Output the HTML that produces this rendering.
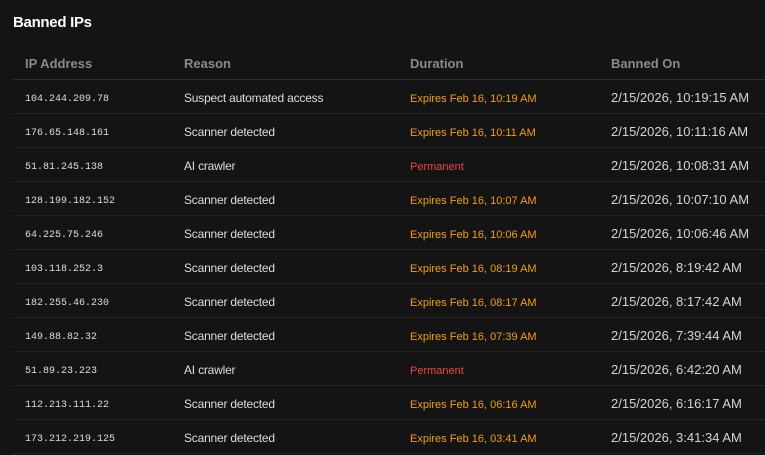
<!DOCTYPE html>
<html><head><meta charset="utf-8"><style>
html,body{margin:0;padding:0;background:#141414;width:765px;height:455px;overflow:hidden;font-family:"Liberation Sans",sans-serif;}
h2{position:absolute;left:13px;top:14px;margin:0;font-size:15px;font-weight:bold;color:#fff;letter-spacing:-0.3px}
.t{position:absolute;left:13px;top:46px;width:752px;}
.row{display:flex;align-items:center;height:33px;border-bottom:1px solid #222;white-space:nowrap}
.h{font-size:13px;font-weight:bold;color:#8a8a8a;border-bottom-color:#2c2c2c;padding-top:1px;height:32px}
.row>div{line-height:1}
.c1{padding-left:12px;width:159px}
.c2{width:226px}.c3{width:201px}
.ip{font-family:"Liberation Mono",monospace;font-size:10px;color:#ddd;position:relative;top:2px}
.r{font-size:12px;color:#ddd;letter-spacing:-0.2px}
.d{font-size:11px;color:#f59e0b;position:relative;top:2px}
.p{color:#ef4444}
.b{font-size:13px;color:#d4d4d4}
.row:not(.h)>div{padding-top:2px}
</style></head><body>
<h2>Banned IPs</h2>
<div class="t">
<div class="row h"><div class="c1">IP Address</div><div class="c2">Reason</div><div class="c3">Duration</div><div>Banned On</div></div>
<div class="row"><div class="c1 ip">104.244.209.78</div><div class="c2 r">Suspect automated access</div><div class="c3 d">Expires Feb 16, 10:19 AM</div><div class="b">2/15/2026, 10:19:15 AM</div></div>
<div class="row"><div class="c1 ip">176.65.148.161</div><div class="c2 r">Scanner detected</div><div class="c3 d">Expires Feb 16, 10:11 AM</div><div class="b">2/15/2026, 10:11:16 AM</div></div>
<div class="row"><div class="c1 ip">51.81.245.138</div><div class="c2 r">AI crawler</div><div class="c3 d p">Permanent</div><div class="b">2/15/2026, 10:08:31 AM</div></div>
<div class="row"><div class="c1 ip">128.199.182.152</div><div class="c2 r">Scanner detected</div><div class="c3 d">Expires Feb 16, 10:07 AM</div><div class="b">2/15/2026, 10:07:10 AM</div></div>
<div class="row"><div class="c1 ip">64.225.75.246</div><div class="c2 r">Scanner detected</div><div class="c3 d">Expires Feb 16, 10:06 AM</div><div class="b">2/15/2026, 10:06:46 AM</div></div>
<div class="row"><div class="c1 ip">103.118.252.3</div><div class="c2 r">Scanner detected</div><div class="c3 d">Expires Feb 16, 08:19 AM</div><div class="b">2/15/2026, 8:19:42 AM</div></div>
<div class="row"><div class="c1 ip">182.255.46.230</div><div class="c2 r">Scanner detected</div><div class="c3 d">Expires Feb 16, 08:17 AM</div><div class="b">2/15/2026, 8:17:42 AM</div></div>
<div class="row"><div class="c1 ip">149.88.82.32</div><div class="c2 r">Scanner detected</div><div class="c3 d">Expires Feb 16, 07:39 AM</div><div class="b">2/15/2026, 7:39:44 AM</div></div>
<div class="row"><div class="c1 ip">51.89.23.223</div><div class="c2 r">AI crawler</div><div class="c3 d p">Permanent</div><div class="b">2/15/2026, 6:42:20 AM</div></div>
<div class="row"><div class="c1 ip">112.213.111.22</div><div class="c2 r">Scanner detected</div><div class="c3 d">Expires Feb 16, 06:16 AM</div><div class="b">2/15/2026, 6:16:17 AM</div></div>
<div class="row"><div class="c1 ip">173.212.219.125</div><div class="c2 r">Scanner detected</div><div class="c3 d">Expires Feb 16, 03:41 AM</div><div class="b">2/15/2026, 3:41:34 AM</div></div>
</div>
</body></html>
